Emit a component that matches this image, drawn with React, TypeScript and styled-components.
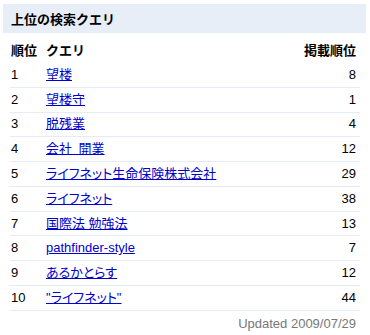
import React from "react";
import styled, { createGlobalStyle } from "styled-components";

const Global = createGlobalStyle`
  html, body { margin: 0; padding: 0; background: #fff; }
  body { font-family: "Liberation Sans", "Noto Sans CJK JP", Arial, sans-serif; font-size: 13px; color: #000; }
`;

const Panel = styled.div`
  width: 370px;
  padding: 4px 4px 0 3px;
  box-sizing: border-box;
`;

const TitleBar = styled.div`
  height: 29px;
  background: #e8eef8;
  display: flex;
  align-items: center;
  padding-left: 8px;
  font-weight: bold;
  font-size: 13px;
`;

const Table = styled.div`
  margin: 0 6px 0 7px;
  display: flex;
  flex-direction: column;
`;

const Row = styled.div<{ $head?: boolean; $first?: boolean }>`
  display: grid;
  grid-template-columns: 35px 1fr auto;
  align-items: center;
  box-sizing: border-box;
  height: ${(p) => (p.$head ? "28px" : p.$first ? "26.8px" : "24.78px")};
  padding: ${(p) => (p.$head ? "7px 4px 0 1px" : p.$first ? "2px 4px 0 1px" : "0 4px 0 1px")};
  border-bottom: ${(p) => (p.$head ? "none" : "1px solid #e5ecf9")};
  font-weight: ${(p) => (p.$head ? "bold" : "normal")};
  line-height: 16px;
`;

const Num = styled.span`
  text-align: right;
`;

const Query = styled.a`
  color: #0000cc;
  text-decoration: underline;
  white-space: nowrap;
  font-feature-settings: "palt";
`;

const Footer = styled.div`
  margin: 0 10px 0 7px;
  text-align: right;
  color: #777;
  line-height: 16px;
  padding-top: 5px;
`;

const data: [string, number][] = [
  ["望楼", 8],
  ["望楼守", 1],
  ["脱残業", 4],
  ["会社\u2002開業", 12],
  ["ライフネット生命保険株式会社", 29],
  ["ライフネット", 38],
  ["国際法 勉強法", 13],
  ["pathfinder-style", 7],
  ["あるかとらす", 12],
  ["\"ライフネット\"", 44],
];

export default function App() {
  return (
    <Panel>
      <Global />
      <TitleBar>上位の検索クエリ</TitleBar>
      <Table>
        <Row $head>
          <span>順位</span>
          <span>クエリ</span>
          <Num>掲載順位</Num>
        </Row>
        {data.map(([q, n], i) => (
          <Row key={i} $first={i === 0}>
            <span>{i + 1}</span>
            <span>
              <Query href="#">{q}</Query>
            </span>
            <Num>{n}</Num>
          </Row>
        ))}
      </Table>
      <Footer>Updated 2009/07/29</Footer>
    </Panel>
  );
}
